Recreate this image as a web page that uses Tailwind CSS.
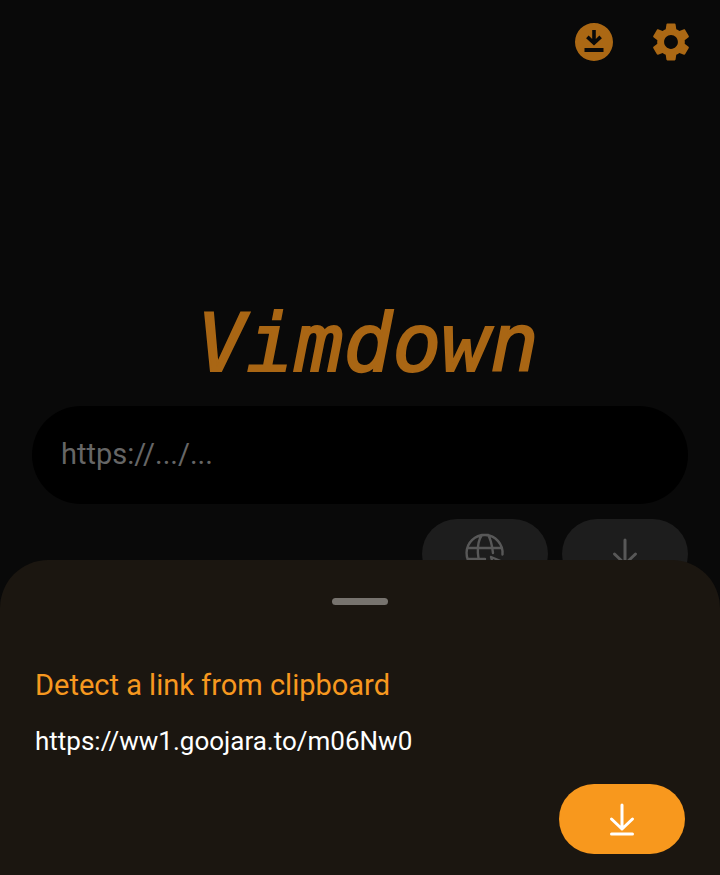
<!DOCTYPE html>
<html lang="en">
<head>
<meta charset="utf-8">
<meta name="viewport" content="width=device-width, initial-scale=1">
<title>Vimdown</title>
<script src="https://cdn.jsdelivr.net/npm/@tailwindcss/browser@4"></script>
</head>
<body class="bg-[#090909] font-[Roboto,sans-serif]">
<div class="relative h-screen overflow-hidden">
  <header class="flex justify-end gap-8 px-[26px] pt-5">
    <button type="button" aria-label="Downloads" class="size-11 text-[#ab6814]">
      <svg viewBox="0 0 44 44" class="size-11" fill="currentColor"><path fill-rule="evenodd" d="M22 3a19 19 0 1 0 0 38 19 19 0 0 0 0-38ZM20.200 10h3.600v9l3.600-3.400 2.500 2.700L22 25.400l-7.900-7.100 2.500-2.700 3.600 3.400ZM12.500 28h19v4h-19Z"/></svg>
    </button>
    <button type="button" aria-label="Settings" class="size-[46px] -mt-px text-[#ab6814]">
      <svg viewBox="0 0 24 24" class="size-[46px]" fill="currentColor"><path d="M19.14 12.940c.04-.3.06-.61.060-.94 0-.32-.02-.64-.07-.94l2.030-1.580c.18-.14.23-.41.120-.61l-1.920-3.320c-.12-.22-.37-.29-.59-.22l-2.390.96c-.5-.38-1.030-.7-1.620-.94l-.36-2.540c-.04-.24-.24-.41-.48-.41h-3.840c-.24 0-.43.17-.47.410l-.36 2.540c-.59.24-1.130.57-1.620.94l-2.390-.96c-.22-.08-.47 0-.59.22L2.740 8.870c-.12.21-.08.470.12.610l2.030 1.580c-.05.3-.09.63-.09.940s.02.64.07.940l-2.030 1.580c-.18.14-.23.41-.12.610l1.920 3.320c.12.22.37.29.590.22l2.390-.96c.5.38 1.030.7 1.620.94l.36 2.540c.05.24.24.41.48.410h3.840c.24 0 .44-.17.470-.41l.36-2.540c.59-.24 1.130-.56 1.620-.94l2.390.96c.22.080.47 0 .59-.22l1.920-3.320c.12-.22.07-.47-.12-.61l-2.010-1.580zM12 15.600c-1.980 0-3.600-1.620-3.600-3.600s1.620-3.600 3.600-3.600 3.600 1.620 3.600 3.600-1.620 3.600-3.600 3.600z"/></svg>
    </button>
  </header>
  <main class="px-8 pt-[228px]">
    <h1 class="pl-4 text-center font-['DejaVu_Sans_Mono',monospace] text-[81px] leading-[100px] italic text-[#a96614] [-webkit-text-stroke:2px_#a96614]">Vimdown</h1>
    <input type="text" aria-label="Link" placeholder="https://.../..." class="mt-[13px] block h-[98px] w-full rounded-full bg-black px-[29px] pb-0.5 text-[29px] text-[#666] placeholder:text-[#666] outline-none">
    <div class="mt-[15px] flex justify-end gap-[14px]">
      <button type="button" aria-label="Open browser" class="flex h-[70px] w-[126px] justify-center rounded-full bg-[#1d1d1d] pt-[14px] text-[#585858]">
        <svg viewBox="0 0 40 40" class="size-10" fill="none" stroke="currentColor" stroke-width="2.400" stroke-linecap="round"><path d="M37.500 21.500A18 18 0 1 0 20 38M3.500 15h33M3.500 26H20M20 2h-3c-6 8-6 28 3 36M20 2h3c3 4 4 10 5 18"/><path d="m26 24 12 5-6 2-2 6Z" stroke-linejoin="round"/></svg>
      </button>
      <button type="button" aria-label="Download" class="flex h-[70px] w-[126px] items-center justify-center rounded-full bg-[#1d1d1d] text-[#585858]">
        <svg viewBox="0 0 28 36" class="h-9 w-7" fill="none" stroke="currentColor" stroke-width="3" stroke-linecap="round" stroke-linejoin="round"><path d="M14 4v24M3.500 18 14 28l10.500-10M3.500 33h21"/></svg>
      </button>
    </div>
  </main>
  <section aria-labelledby="sheet-title" class="absolute inset-x-0 bottom-0 rounded-t-[48px] bg-[#1b1610] px-[35px] pt-[38px] pb-[21px]">
    <div class="mx-auto h-[7px] w-14 rounded-full bg-[#77736e]"></div>
    <h2 id="sheet-title" class="mt-[60px] text-[29px] leading-10 text-[#f7981f]">Detect a link from clipboard</h2>
    <p class="mt-4 text-[26px] leading-10 text-white">https://ww1.goojara.to/m06Nw0</p>
    <div class="mt-[23px] flex justify-end">
      <button type="button" aria-label="Download link" class="flex h-[70px] w-[126px] items-center justify-center rounded-full bg-[#f8981d] text-white">
        <svg viewBox="0 0 28 36" class="h-9 w-7" fill="none" stroke="currentColor" stroke-width="3" stroke-linecap="round" stroke-linejoin="round"><path d="M14 4v24M3.500 18 14 28l10.500-10M3.500 33h21"/></svg>
      </button>
    </div>
  </section>
</div>
</body>
</html>
